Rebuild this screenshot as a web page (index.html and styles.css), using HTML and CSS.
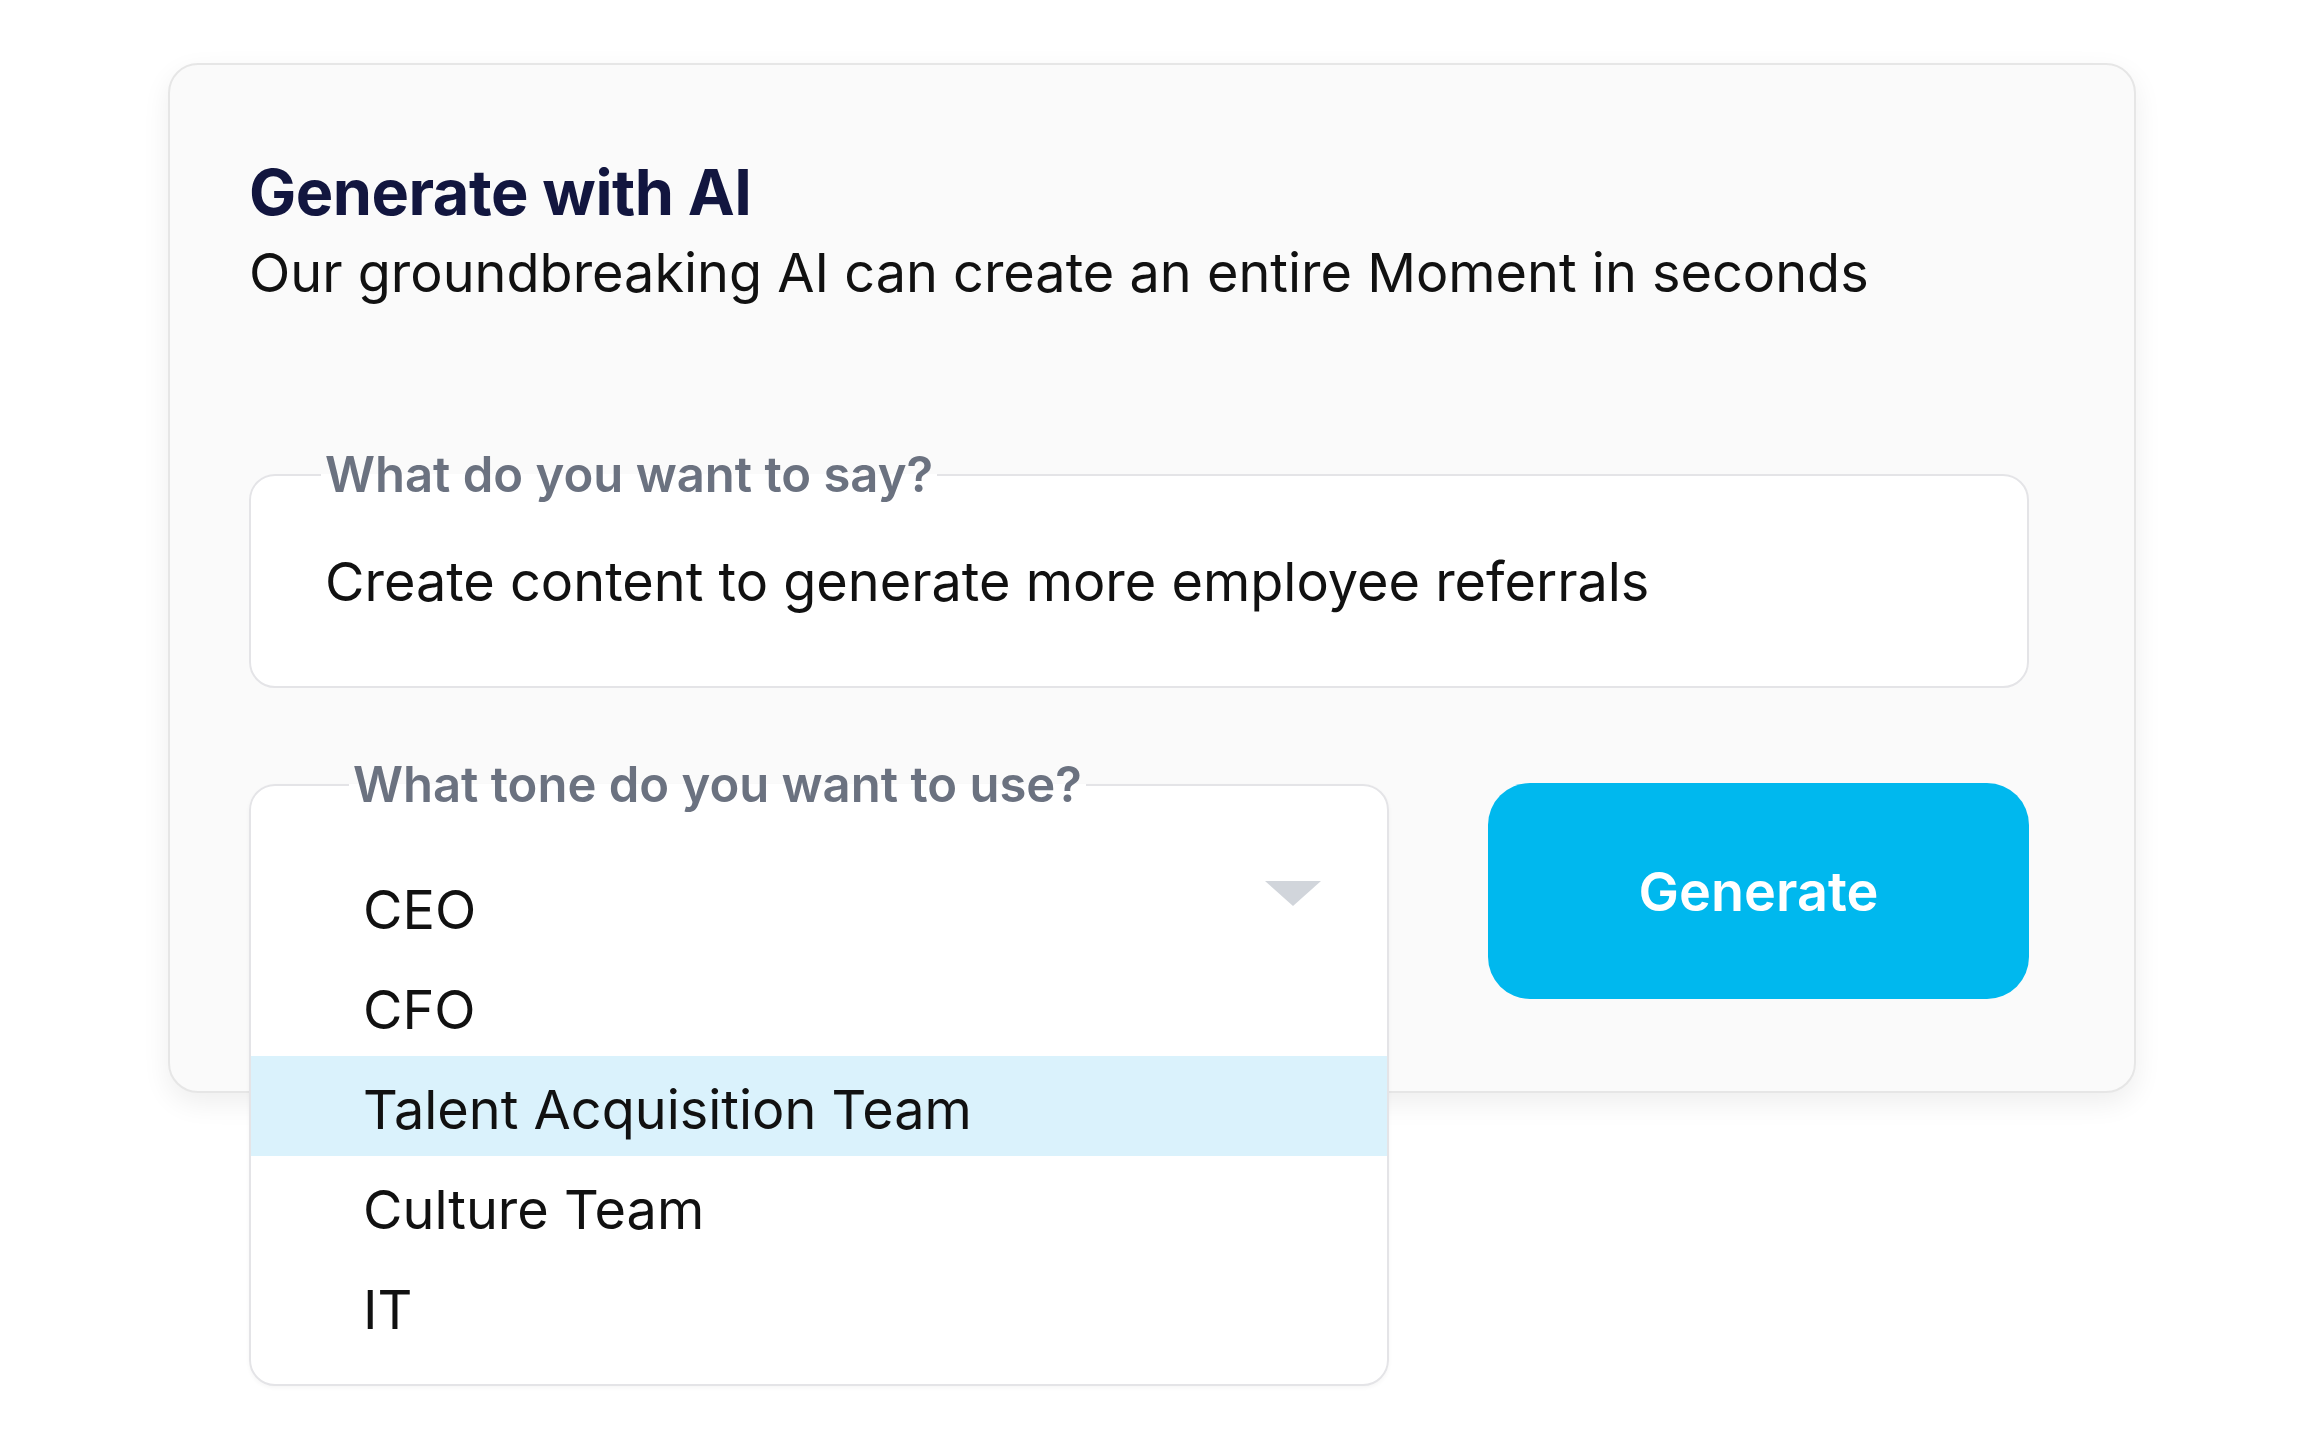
FILE: index.html
```html
<!DOCTYPE html>
<html lang="en">
<head>
<meta charset="utf-8">
<title>Generate with AI</title>
<link rel="stylesheet" href="styles.css">
</head>
<body>
<div class="card">
  <h1 class="title">Generate with AI</h1>
  <p class="subtitle">Our groundbreaking AI can create an entire Moment in seconds</p>
  <fieldset class="field field-text">
    <legend class="legend legend-text">What do you want to say?</legend>
    <div class="field-value">Create content to generate more employee referrals</div>
  </fieldset>
  <div class="row">
    <div class="select-wrap">
      <fieldset class="field field-select">
        <legend class="legend legend-select">What tone do you want to use?</legend>
        <ul class="options">
          <li class="option option-current"><span>CEO</span>
            <svg class="caret" width="56" height="25" viewBox="0 0 56 25"><path d="M0 0 H56 L28 25 Z" fill="#d1d5db"/></svg>
          </li>
          <li class="option"><span>CFO</span></li>
          <li class="option option-active"><span>Talent Acquisition Team</span></li>
          <li class="option"><span>Culture Team</span></li>
          <li class="option"><span>IT</span></li>
        </ul>
      </fieldset>
    </div>
    <button class="generate" type="button">Generate</button>
  </div>
</div>
</body>
</html>
```
FILE: styles.css
```css
* { box-sizing: border-box; }

html, body {
  margin: 0;
  padding: 0;
  background: #ffffff;
}

body {
  font-family: "Inter", "Noto Sans", "Liberation Sans", sans-serif;
  color: #111111;
  width: 2304px;
  height: 1440px;
  overflow: hidden;
}

.card {
  margin: 63px 0 0 168px;
  width: 1968px;
  background: #fafafa;
  border: 2px solid #e6e6e6;
  border-radius: 30px;
  padding: 89px 105px 92px 79px;
  box-shadow: 0 10px 28px rgba(0, 0, 0, 0.07);
}

.title {
  margin: 0;
  font-size: 63px;
  line-height: 76px;
  font-weight: 700;
  color: #12163f;
  letter-spacing: -0.5px;
}

.subtitle {
  margin: 10px 0 0 0;
  font-size: 54px;
  line-height: 65px;
  font-weight: 400;
  color: #111111;
}

.field {
  margin: 0;
  min-width: 0;
  border: 2px solid #e4e4e7;
  background: #ffffff;
}

.legend {
  font-size: 49px;
  line-height: 58px;
  font-weight: 600;
  color: #6b7280;
  padding: 0 4px;
}

.field-text {
  margin-top: 141px;
  border-radius: 26px;
  padding: 45px 40px 72px 74px;
}

.legend-text {
  margin-left: -4px;
}

.field-value {
  font-size: 54px;
  line-height: 65px;
  color: #111111;
}

.row {
  margin-top: 68px;
  display: flex;
  align-items: flex-start;
  gap: 99px;
}

.select-wrap {
  position: relative;
  width: 1140px;
  height: 243px;
  flex: none;
}

.field-select {
  position: absolute;
  top: 0;
  left: 0;
  width: 1140px;
  border-radius: 26px;
  padding: 0;
  box-shadow: 0 2px 4px rgba(0, 0, 0, 0.04);
  z-index: 2;
}

.legend-select {
  margin-left: 98px;
}

.options {
  list-style: none;
  margin: 0;
  padding: 42px 0 28px 0;
}

.option {
  display: flex;
  align-items: flex-start;
  justify-content: space-between;
  height: 100px;
  padding: 8px 66px 0 112px;
  font-size: 54px;
  line-height: 92px;
  color: #111111;
}

.option-active {
  background: #daf2fc;
}

.caret {
  margin-top: 17px;
  flex: none;
}

.generate {
  margin-top: 27px;
  width: 541px;
  height: 216px;
  flex: none;
  border: none;
  border-radius: 42px;
  background: #00b8ee;
  color: #ffffff;
  font-family: "Inter", "Noto Sans", "Liberation Sans", sans-serif;
  font-size: 54px;
  font-weight: 600;
  cursor: pointer;
  padding: 0;
}
```
